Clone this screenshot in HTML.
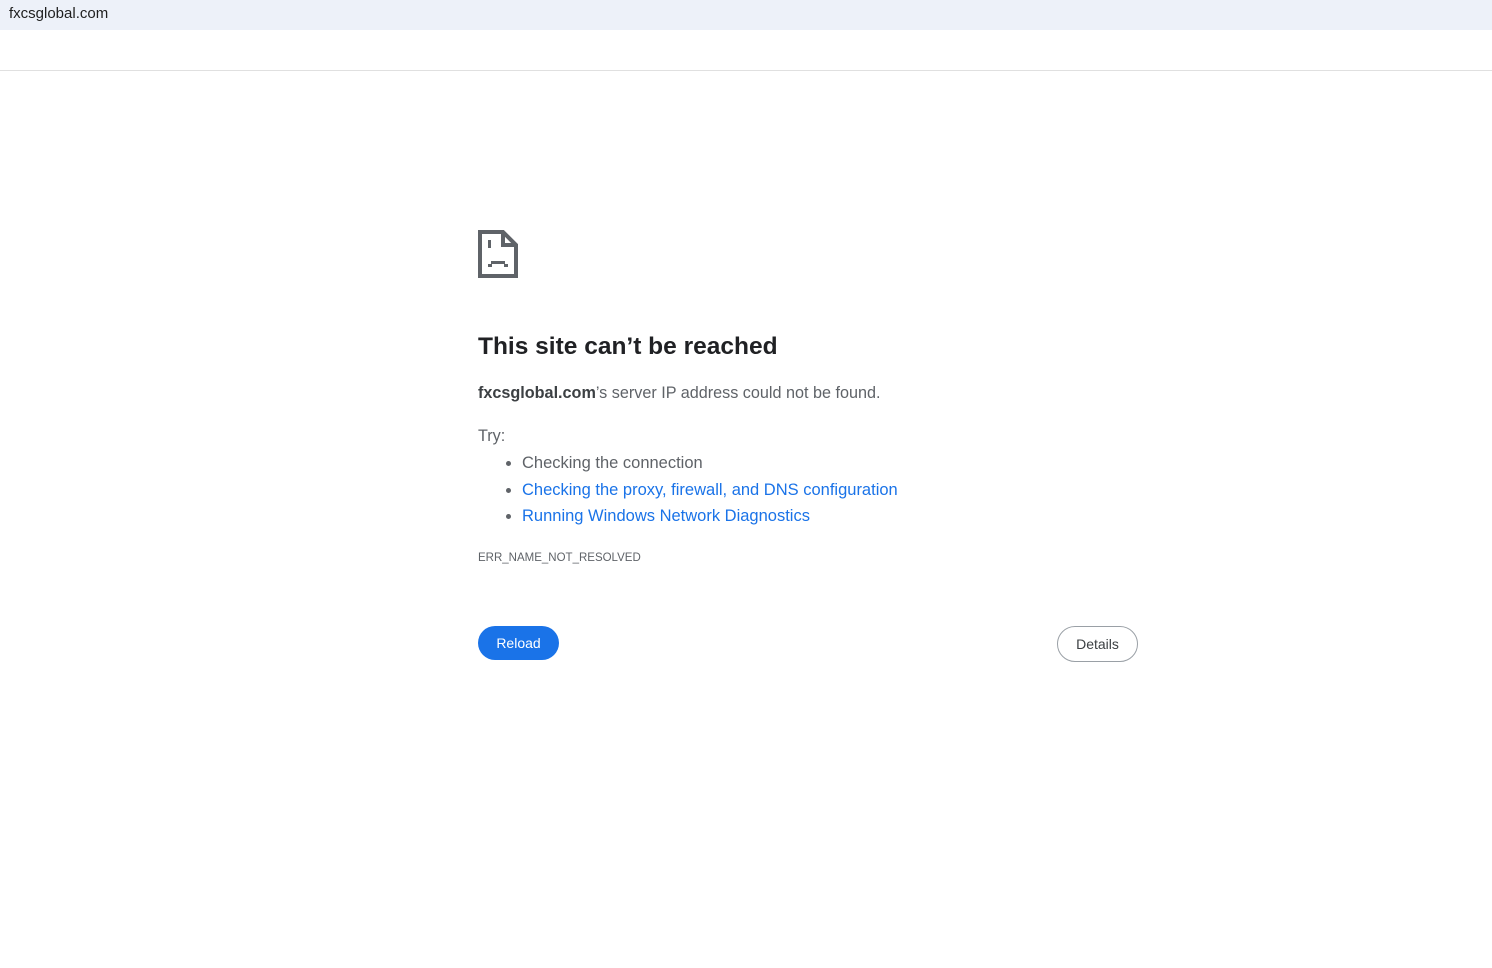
<!DOCTYPE html>
<html><head><meta charset="utf-8"><style>
body{margin:0;width:1492px;height:968px;background:#fff;font-family:"Liberation Sans",sans-serif;position:relative;overflow:hidden}
.bar{position:absolute;left:0;top:0;width:1492px;height:30px;background:#edf1f9}
.bar span{position:absolute;left:9px;top:5px;font-size:15px;color:#1f1f1f}
.line{position:absolute;left:0;top:70px;width:1492px;height:1px;background:#e0e0e0}
.a{position:absolute;left:478px;color:#5f6368}
h1{position:absolute;left:478px;top:333px;margin:0;font-weight:bold;color:#202124;font-family:"Liberation Sans",sans-serif;font-size:24.5px;letter-spacing:0}
ul{position:absolute;left:478px;top:450px;margin:0;padding-left:44px;font-size:16.5px;color:#5f6368;line-height:26.5px}
a{color:#1a73e8;text-decoration:none}
.btn{position:absolute;border-radius:18px;font-size:14px;text-align:center}
</style></head><body>
<div class="bar"><span>fxcsglobal.com</span></div>
<div class="line"></div>
<svg style="position:absolute;left:478px;top:230px" width="40" height="48" viewBox="0 0 40 48">
<path d="M2 2 H25 L38 15 V46 H2 Z" fill="none" stroke="#5f6368" stroke-width="4"/>
<path d="M25 2 V15 H38" fill="none" stroke="#5f6368" stroke-width="4"/>
<rect x="10" y="10" width="3" height="8" fill="#5f6368"/>
<rect x="10" y="34" width="4" height="3" fill="#5f6368"/>
<rect x="13" y="31" width="14" height="3" fill="#5f6368"/>
<rect x="26" y="34" width="4" height="3" fill="#5f6368"/>
</svg>
<h1>This site can’t be reached</h1>
<div class="a" style="top:384px;font-size:16.2px"><b style="color:#3c4043">fxcsglobal.com</b>’s server IP address could not be found.</div>
<div class="a" style="top:427px;font-size:16.2px">Try:</div>
<ul>
<li>Checking the connection</li>
<li><a>Checking the proxy, firewall, and DNS configuration</a></li>
<li><a>Running Windows Network Diagnostics</a></li>
</ul>
<div class="a" style="top:552px;font-size:11.5px">ERR_NAME_NOT_RESOLVED</div>
<div class="btn" style="left:478px;top:626px;width:81px;height:34px;line-height:34px;background:#1a73e8;color:#fff">Reload</div>
<div class="btn" style="left:1057px;top:626px;width:79px;height:34px;line-height:34px;border:1px solid #9aa0a6;color:#3c4043">Details</div>
</body></html>
